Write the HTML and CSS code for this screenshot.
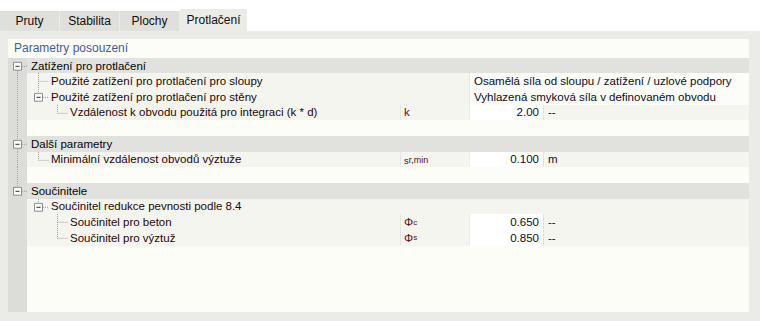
FILE: index.html
```html
<!DOCTYPE html>
<html lang="cs">
<head>
    <meta charset="UTF-8">
    <title>Protlačení</title>
    <link rel="stylesheet" href="styles.css">
</head>
<body>
    <div class="tabs">
        <div class="tab">Pruty</div>
        <div class="tab">Stabilita</div>
        <div class="tab">Plochy</div>
        <div class="tab active">Protlačení</div>
    </div>

    <div class="page">
        <div class="panel">
            <div class="caption">Parametry posouzení</div>
            <div class="tree">

                <!-- Zatížení pro protlačení -->
                <div class="row group">
                    <div class="gut">
                        <svg viewBox="0 0 19 16" preserveAspectRatio="none">
                            <line class="dot" x1="9.5" y1="13" x2="9.5" y2="16"/>
                            <line class="dot" x1="14" y1="8.5" x2="19" y2="8.5"/>
                            <rect class="box" x="5.5" y="4.5" width="8" height="8"/>
                            <line class="minus" x1="7.5" y1="8.5" x2="11.5" y2="8.5"/>
                        </svg>
                    </div>
                    <div class="name full">Zatížení pro protlačení</div>
                </div>
                <div class="row item">
                    <div class="gut trunk"></div>
                    <div class="name wide">
                        <svg class="lvl1" viewBox="0 0 24 16" preserveAspectRatio="none">
                            <line class="dot" x1="11.5" y1="0" x2="11.5" y2="16"/>
                            <line class="dot" x1="11.5" y1="8.5" x2="22" y2="8.5"/>
                        </svg>
                        <span>Použité zatížení pro protlačení pro sloupy</span>
                    </div>
                    <div class="desc">Osamělá síla od sloupu / zatížení / uzlové podpory</div>
                </div>
                <div class="row item">
                    <div class="gut trunk"></div>
                    <div class="name wide">
                        <svg class="lvl1" viewBox="0 0 24 16" preserveAspectRatio="none">
                            <line class="dot" x1="11.5" y1="0" x2="11.5" y2="4"/>
                            <line class="dot" x1="16" y1="8.5" x2="22" y2="8.5"/>
                            <rect class="box" x="7.5" y="4.5" width="8" height="8"/>
                            <line class="minus" x1="9.5" y1="8.5" x2="13.5" y2="8.5"/>
                        </svg>
                        <span>Použité zatížení pro protlačení pro stěny</span>
                    </div>
                    <div class="desc">Vyhlazená smyková síla v definovaném obvodu</div>
                </div>
                <div class="row item">
                    <div class="gut trunk"></div>
                    <div class="name">
                        <svg class="lvl2" viewBox="0 0 43 16" preserveAspectRatio="none">
                            <line class="dot" x1="30.5" y1="0" x2="30.5" y2="8.5"/>
                            <line class="dot" x1="30.5" y1="8.5" x2="41" y2="8.5"/>
                        </svg>
                        <span>Vzdálenost k obvodu použitá pro integraci (k * d)</span>
                    </div>
                    <div class="sym">k</div>
                    <div class="val">2.00</div>
                    <div class="unit">--</div>
                </div>
                <div class="row blank"><div class="gut trunk"></div></div>

                <!-- Další parametry -->
                <div class="row group">
                    <div class="gut">
                        <svg viewBox="0 0 19 16" preserveAspectRatio="none">
                            <line class="dot" x1="9.5" y1="0" x2="9.5" y2="4"/>
                            <line class="dot" x1="9.5" y1="13" x2="9.5" y2="16"/>
                            <line class="dot" x1="14" y1="8.5" x2="19" y2="8.5"/>
                            <rect class="box" x="5.5" y="4.5" width="8" height="8"/>
                            <line class="minus" x1="7.5" y1="8.5" x2="11.5" y2="8.5"/>
                        </svg>
                    </div>
                    <div class="name full">Další parametry</div>
                </div>
                <div class="row item">
                    <div class="gut trunk"></div>
                    <div class="name">
                        <svg class="lvl1" viewBox="0 0 24 16" preserveAspectRatio="none">
                            <line class="dot" x1="11.5" y1="0" x2="11.5" y2="8.5"/>
                            <line class="dot" x1="11.5" y1="8.5" x2="22" y2="8.5"/>
                        </svg>
                        <span>Minimální vzdálenost obvodů výztuže</span>
                    </div>
                    <div class="sym small">s<sub>r,min</sub></div>
                    <div class="val">0.100</div>
                    <div class="unit">m</div>
                </div>
                <div class="row blank"><div class="gut trunk"></div></div>

                <!-- Součinitele -->
                <div class="row group">
                    <div class="gut">
                        <svg viewBox="0 0 19 16" preserveAspectRatio="none">
                            <line class="dot" x1="9.5" y1="0" x2="9.5" y2="4"/>
                            <line class="dot" x1="14" y1="8.5" x2="19" y2="8.5"/>
                            <rect class="box" x="5.5" y="4.5" width="8" height="8"/>
                            <line class="minus" x1="7.5" y1="8.5" x2="11.5" y2="8.5"/>
                        </svg>
                    </div>
                    <div class="name full">Součinitele</div>
                </div>
                <div class="row item">
                    <div class="gut"></div>
                    <div class="name full">
                        <svg class="lvl1" viewBox="0 0 24 16" preserveAspectRatio="none">
                            <line class="dot" x1="11.5" y1="0" x2="11.5" y2="4"/>
                            <line class="dot" x1="16" y1="8.5" x2="22" y2="8.5"/>
                            <rect class="box" x="7.5" y="4.5" width="8" height="8"/>
                            <line class="minus" x1="9.5" y1="8.5" x2="13.5" y2="8.5"/>
                        </svg>
                        <span>Součinitel redukce pevnosti podle 8.4</span>
                    </div>
                </div>
                <div class="row item">
                    <div class="gut"></div>
                    <div class="name">
                        <svg class="lvl2" viewBox="0 0 43 16" preserveAspectRatio="none">
                            <line class="dot" x1="30.5" y1="0" x2="30.5" y2="16"/>
                            <line class="dot" x1="30.5" y1="8.5" x2="41" y2="8.5"/>
                        </svg>
                        <span>Součinitel pro beton</span>
                    </div>
                    <div class="sym">Φ<sub>c</sub></div>
                    <div class="val">0.650</div>
                    <div class="unit">--</div>
                </div>
                <div class="row item">
                    <div class="gut"></div>
                    <div class="name">
                        <svg class="lvl2" viewBox="0 0 43 16" preserveAspectRatio="none">
                            <line class="dot" x1="30.5" y1="0" x2="30.5" y2="8.5"/>
                            <line class="dot" x1="30.5" y1="8.5" x2="41" y2="8.5"/>
                        </svg>
                        <span>Součinitel pro výztuž</span>
                    </div>
                    <div class="sym">Φ<sub>s</sub></div>
                    <div class="val">0.850</div>
                    <div class="unit">--</div>
                </div>

            </div>
        </div>
    </div>
</body>
</html>
```

FILE: styles.css
```css
body {
    margin: 0;
    background-color: #fff;
    font-family: "Liberation Sans", Arial, sans-serif;
    font-size: 11.5px;
    color: #111;
}

/* tab strip */
.tabs {
    display: flex;
    align-items: flex-end;
    height: 31px;
}
.tab {
    width: 60px;
    height: 20px;
    background-color: #dfdfdb;
    border-right: 1px solid #ebebe7;
    box-sizing: border-box;
    display: flex;
    align-items: center;
    justify-content: center;
    font-size: 12px;
    color: #0e0e0e;
}
.tab.active {
    width: 67px;
    height: 22px;
    background-color: #ebebe7;
    border-right: none;
}

/* panel */
.page {
    height: 290px;
    box-sizing: border-box;
    padding: 8px 11px 9px 8px;
    background-color: #ebebe7;
    display: flex;
}
.panel {
    flex: 1;
    background-color: #fdfdf8;
    display: flex;
    flex-direction: column;
}
.caption {
    height: 18.7px;
    line-height: 18px;
    padding-left: 6px;
    font-size: 12px;
    color: #3f5b98;
}
.tree {
    flex: 1;
    background: linear-gradient(to right, #dcdcd8 19px, transparent 19px);
}

/* rows */
.row {
    display: grid;
    grid-template-columns: 19px 373px 69px 74px 1fr;
    height: 15.67px;
}
.row > div {
    display: flex;
    align-items: center;
    min-width: 0;
    white-space: nowrap;
    overflow: hidden;
}
.row svg {
    height: 100%;
    flex: none;
    overflow: visible;
}
.gut svg {
    width: 19px;
}
.lvl1 {
    width: 24px;
}
.lvl2 {
    width: 43px;
}
.group {
    background-color: #e1e1dd;
}
.group .gut {
    background-color: #dcdcd8;
}
.group .name {
    padding-left: 4px;
    color: #050505;
}
.gut.trunk {
    background-image: repeating-linear-gradient(to bottom, #a4a4a0 0 1px, transparent 1px 2px);
    background-size: 1px 100%;
    background-position: 9px 0;
    background-repeat: no-repeat;
}
.item .name,
.item .sym,
.item .unit {
    background-color: #f5f5f0;
}
.item .name {
    color: #1e0606;
}
.name.wide {
    grid-column: 2 / 4;
}
.name.full {
    grid-column: 2 / -1;
}
.desc {
    grid-column: 4 / -1;
    padding-left: 4px;
    border-left: 1px solid #e6e6e2;
    background-color: #fcfcf9;
    color: #0c0c22;
}
.sym {
    padding-left: 3px;
    border-left: 1px solid #e4e4e0;
    color: #5a0e0e;
}
.sym sub {
    font-size: 8px;
    vertical-align: -2px;
}
.sym.small {
    font-size: 9.5px;
    padding-top: 2px;
}
.sym.small sub {
    font-size: 9px;
    vertical-align: -1px;
}
.val {
    justify-content: flex-end;
    padding-right: 4px;
    background-color: #fff;
    border-left: 1px solid #ececE8;
    color: #0c0c22;
}
.unit {
    padding-left: 4px;
    border-left: 1px solid #e2e2de;
    color: #111;
}

/* tree glyphs */
.dot {
    stroke: #a0a0a0;
    stroke-width: 1;
    stroke-dasharray: 1 1;
    vector-effect: non-scaling-stroke;
}
.box {
    fill: #fbfbfb;
    stroke: #8e8e8e;
    stroke-width: 1;
    vector-effect: non-scaling-stroke;
}
.minus {
    stroke: #333;
    stroke-width: 1;
    vector-effect: non-scaling-stroke;
}
```
